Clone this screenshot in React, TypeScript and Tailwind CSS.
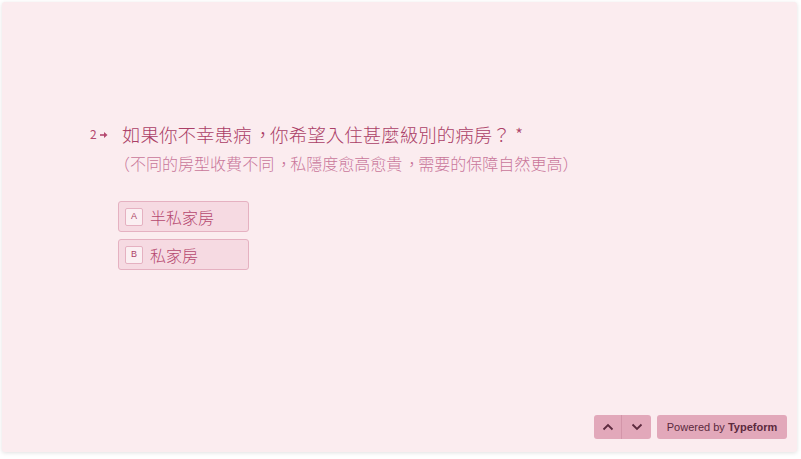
import React from "react";

const font = { fontFamily: '"Noto Sans CJK TC", "Noto Sans", sans-serif' };

function Cjk({ text }: { text: string }) {
  return (
    <>
      {Array.from(text).map((ch, i) => {
        if (ch === "，")
          return (
            <span key={i} className="inline-block w-[1em]">
              <span className="inline-block w-0 ml-[0.1em]">{ch}</span>
            </span>
          );
        if (ch === "？")
          return (
            <span key={i} className="inline-block w-[1em]">
              {ch}
            </span>
          );
        return <React.Fragment key={i}>{ch}</React.Fragment>;
      })}
    </>
  );
}

export default function App() {
  return (
    <div lang="zh-Hant-TW" className="w-[801px] h-[459px] bg-white overflow-hidden" style={font}>
      <div className="ml-[2px] mt-[2px] w-[795px] h-[450px] bg-[#fbecef] rounded-[3px] shadow-[0_1px_4px_rgba(0,0,0,0.12)] flex flex-col">
        <div className="flex-1 pt-[118px] pl-[88px]">
          <div className="flex items-start">
            <div className="w-[30px] flex items-center gap-[2px] pt-[4px] text-[#b5486f] text-[12px] leading-[20px]">
              <span>2</span>
              <svg width="10" height="10" viewBox="0 0 10 10" className="mt-[1px]">
                <path d="M1 5 H7" stroke="#b5486f" strokeWidth="1.6" />
                <path d="M5 2 L8.5 5 L5 8 Z" fill="#b5486f" />
              </svg>
            </div>
            <div className="flex flex-col">
              <div className="ml-[2px] text-[18.5px] leading-[28px] text-[#ab3f67] font-light whitespace-nowrap">
                <Cjk text="如果你不幸患病，你希望入住甚麼級別的病房？" /> <span>*</span>
              </div>
              <div className="text-[16px] leading-[24px] text-[#c9769a] mt-[3px] -ml-[6px] font-light whitespace-nowrap">
                <Cjk text="（不同的房型收費不同，私隱度愈高愈貴，需要的保障自然更高）" />
              </div>
              <div className="flex flex-col gap-[7px] mt-[26px] -ml-[2px]">
                {[
                  ["A", "半私家房"],
                  ["B", "私家房"],
                ].map(([k, t]) => (
                  <div
                    key={k}
                    className="w-[131px] h-[31px] flex items-center bg-[#f6dae2] border border-[#e5b1c1] rounded-[3px] pl-[6px]"
                  >
                    <div className="w-[18px] h-[18px] flex items-center justify-center bg-[#fbeff2] border border-[#e5b1c1] rounded-[2px] text-[9px] text-[#ab3f67]" style={{ fontFamily: '"Liberation Sans", sans-serif' }}>
                      {k}
                    </div>
                    <span className="ml-[7px] text-[16px] text-[#b5486f] leading-none font-light">{t}</span>
                  </div>
                ))}
              </div>
            </div>
          </div>
        </div>
        <div className="flex justify-end items-center gap-[6px] pr-[10px] pb-[13px]">
          <div className="flex h-[24px] rounded-[3px] overflow-hidden bg-[#e2a8ba]">
            <div className="w-[28px] flex items-center justify-center border-r border-[#d395a9]">
              <svg width="12" height="8" viewBox="0 0 12 8">
                <path d="M1.5 6.5 L6 2 L10.5 6.5" stroke="#5c2a3e" strokeWidth="1.8" fill="none" />
              </svg>
            </div>
            <div className="w-[29px] flex items-center justify-center">
              <svg width="12" height="8" viewBox="0 0 12 8">
                <path d="M1.5 1.5 L6 6 L10.5 1.5" stroke="#5c2a3e" strokeWidth="1.8" fill="none" />
              </svg>
            </div>
          </div>
          <div className="h-[24px] w-[130px] flex items-center justify-center rounded-[3px] bg-[#e2a8ba] text-[11px] text-[#5c2a3e]" style={{ fontFamily: '"Liberation Sans", Arial, sans-serif' }}>
            Powered by&nbsp;<span className="font-bold">Typeform</span>
          </div>
        </div>
      </div>
    </div>
  );
}
